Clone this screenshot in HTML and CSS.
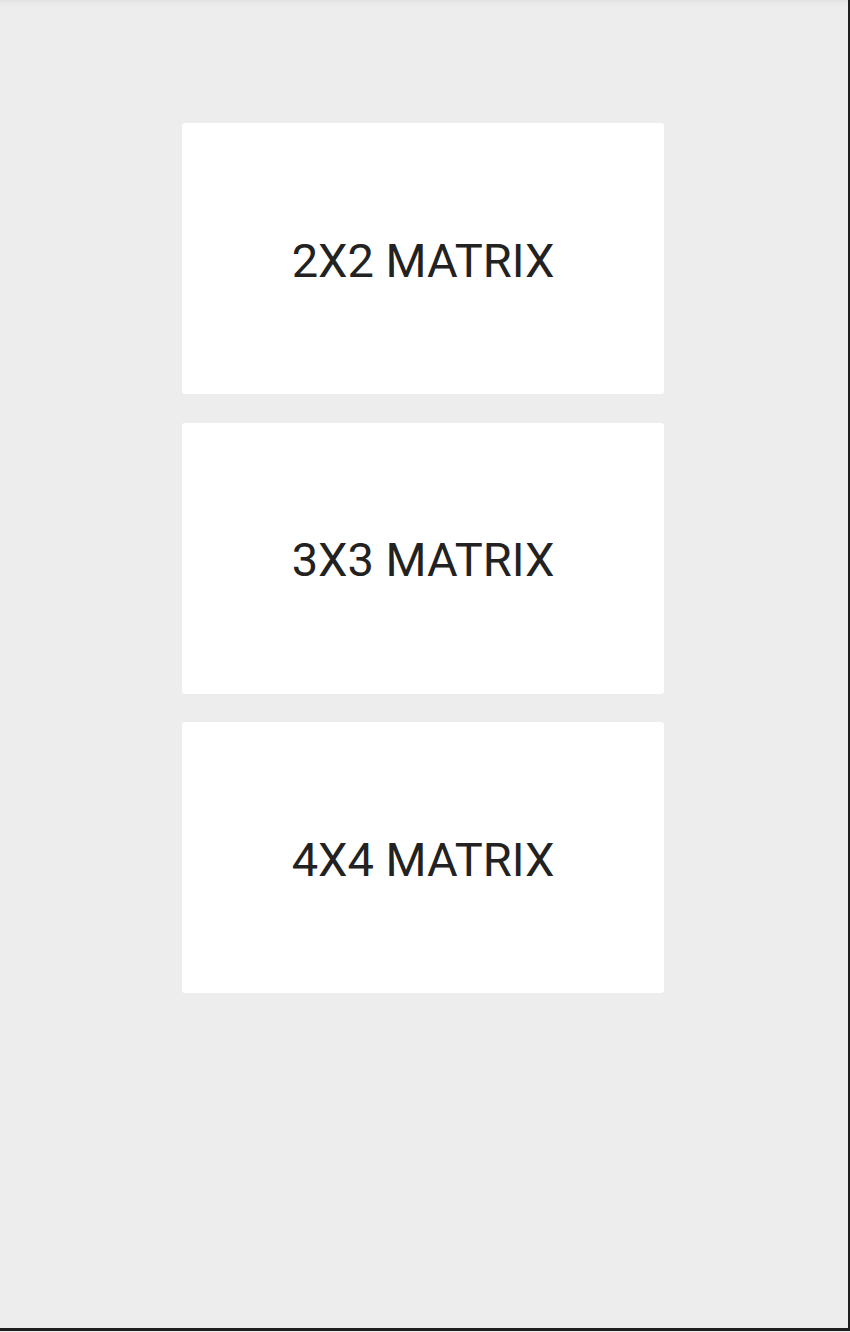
FILE: index.html
```html
<!DOCTYPE html>
<html>
<head>
<meta charset="utf-8">
<link rel="stylesheet" href="styles.css">
</head>
<body>
<div class="screen">
  <div class="list">
    <div class="card">2X2 MATRIX</div>
    <div class="card">3X3 MATRIX</div>
    <div class="card">4X4 MATRIX</div>
  </div>
</div>
</body>
</html>
```
FILE: styles.css
```css
html, body {
  margin: 0;
  padding: 0;
  background: #ededed;
}
.screen {
  width: 848px;
  height: 1328px;
  border-right: 2px solid #1f1f1f;
  border-bottom: 3px solid #1f1f1f;
  background: #ededed;
  box-shadow: inset 0 6px 6px -4px rgba(0,0,0,0.06);
  font-family: Roboto, "Liberation Sans", sans-serif;
}
.list {
  display: flex;
  flex-direction: column;
  align-items: center;
  gap: 28.5px;
  padding-top: 123px;
  padding-right: 2px;
}
.card {
  width: 482px;
  height: 271px;
  background: #ffffff;
  border-radius: 3px;
  display: flex;
  align-items: center;
  justify-content: center;
  font-size: 47px;
  color: #222222;
  padding-top: 3px;
  box-sizing: border-box;
}
```
